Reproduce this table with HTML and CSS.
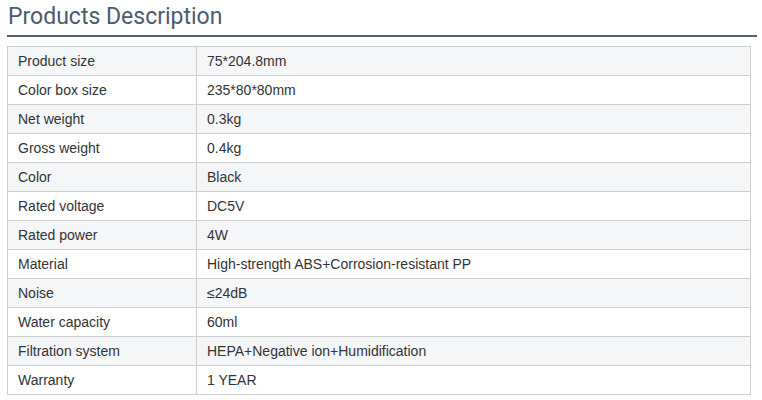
FILE: index.html
```html
<!DOCTYPE html>
<html>
<head>
<meta charset="utf-8">
<link rel="stylesheet" href="styles.css">
</head>
<body>
<section class="desc">
  <h2 class="desc-title">Products Description</h2>
  <table class="spec">
    <tbody>
      <tr><td class="k">Product size</td><td>75*204.8mm</td></tr>
      <tr><td class="k">Color box size</td><td>235*80*80mm</td></tr>
      <tr><td class="k">Net weight</td><td>0.3kg</td></tr>
      <tr><td class="k">Gross weight</td><td>0.4kg</td></tr>
      <tr><td class="k">Color</td><td>Black</td></tr>
      <tr><td class="k">Rated voltage</td><td>DC5V</td></tr>
      <tr><td class="k">Rated power</td><td>4W</td></tr>
      <tr><td class="k">Material</td><td>High-strength ABS+Corrosion-resistant PP</td></tr>
      <tr><td class="k">Noise</td><td>≤24dB</td></tr>
      <tr><td class="k">Water capacity</td><td>60ml</td></tr>
      <tr><td class="k">Filtration system</td><td>HEPA+Negative ion+Humidification</td></tr>
      <tr><td class="k">Warranty</td><td>1 YEAR</td></tr>
    </tbody>
  </table>
</section>
</body>
</html>
```
FILE: styles.css
```css
* { box-sizing: border-box; }
html, body { margin: 0; padding: 0; background: #fff; }
.desc {
  padding: 0 5px 0 7px;
  width: 762px;
}
.desc-title {
  margin: 0;
  font-family: Roboto, "Liberation Sans", sans-serif;
  font-weight: 400;
  font-size: 23px;
  line-height: 28px;
  color: #4f5b6c;
  padding: 3px 0 3px 1px;
  border-bottom: 2px solid #546174;
  height: 37px;
}
.spec {
  margin-top: 9px;
  width: 744px;
  border-collapse: collapse;
  font-family: "Liberation Sans", Arial, sans-serif;
  font-size: 14px;
  color: #333;
}
.spec td {
  border: 1px solid #cfcfcf;
  height: 29px;
  padding: 0 10px;
  vertical-align: middle;
}
.spec td.k { width: 189px; }
.spec tr:nth-child(odd) td { background: #f5f6f8; }
```
